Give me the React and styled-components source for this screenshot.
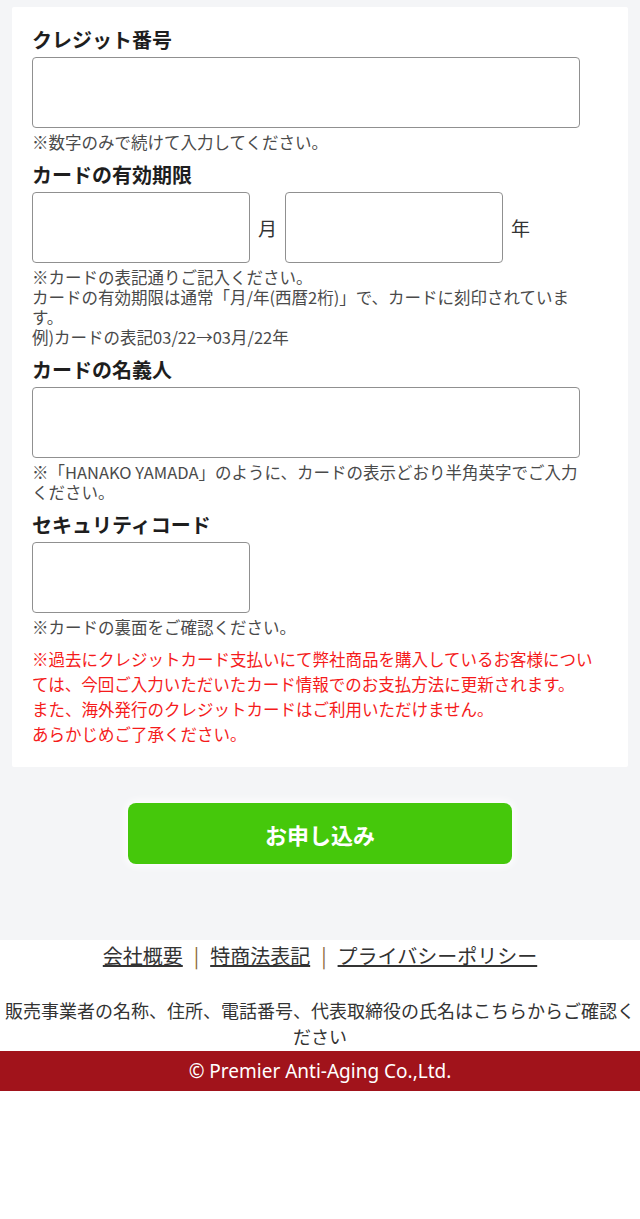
import React from 'react'
import styled, { createGlobalStyle } from 'styled-components'

const GlobalStyle = createGlobalStyle`
  body {
    margin: 0;
    background: #fff;
    font-family: "Noto Sans CJK JP", "Noto Sans", sans-serif;
    color: #222;
  }
`

const Main = styled.main`
  background: #f4f5f7;
  padding: 7px 12px 76px;
`

const Card = styled.div`
  background: #fff;
  border-radius: 2px;
  padding: 18px 20px 20px;
`

const Field = styled.div`
  margin-bottom: 8px;
`

const Label = styled.div`
  font-size: 20px;
  font-weight: 700;
  line-height: 30px;
  margin-bottom: 2px;
  color: #1e1e1e;
`

const Input = styled.input`
  display: block;
  box-sizing: border-box;
  width: ${props => props.width || '548px'};
  height: 71px;
  border: 1.5px solid #909090;
  border-radius: 4px;
  background: #fff;
  font-size: 18px;
  padding: 0 10px;
`

const InlineRow = styled.div`
  display: flex;
  align-items: center;
`

const Unit = styled.span`
  font-size: 19px;
  color: #333;
  margin: 0 8px 0 8px;
`

const Note = styled.p`
  margin: 4px 0 0;
  width: 548px;
  font-size: 16.5px;
  line-height: 20px;
  color: #4a4a4a;
`

const Caution = styled.p`
  margin: 10px 0 0;
  font-size: 16.5px;
  line-height: 25px;
  color: #f51b1b;
`

const SubmitButton = styled.button`
  display: block;
  width: 384px;
  height: 61px;
  margin: 36px auto 0;
  border: none;
  border-radius: 8px;
  background: #45c80b;
  color: #fff;
  font-family: inherit;
  font-size: 22px;
  font-weight: 700;
  box-shadow: 0 0 8px 2px #fff;
  cursor: pointer;
`

const Footer = styled.footer`
  text-align: center;
`

const Links = styled.nav`
  font-size: 20px;
  line-height: 32px;
  color: #333;
`

const FooterLink = styled.a`
  color: #333;
  text-decoration: underline;
`

const Sep = styled.span`
  margin: 0 11px;
  color: #8a6a3a;
`

const Disclosure = styled.p`
  margin: 25px 0 2px;
  font-size: 18px;
  line-height: 26px;
  color: #333;
`

const Copyright = styled.div`
  background: #a1131b;
  color: #fff;
  height: 40px;
  line-height: 40px;
  font-size: 19px;
  font-family: "Noto Sans", sans-serif;
`

export default function App() {
  return (
    <>
      <GlobalStyle />
      <Main>
        <Card>
          <Field>
            <Label>クレジット番号</Label>
            <Input type="text" />
            <Note>※数字のみで続けて入力してください。</Note>
          </Field>

          <Field>
            <Label>カードの有効期限</Label>
            <InlineRow>
              <Input type="text" width="218px" />
              <Unit>月</Unit>
              <Input type="text" width="218px" />
              <Unit>年</Unit>
            </InlineRow>
            <Note>
              ※カードの表記通りご記入ください。
              <br />
              カードの有効期限は通常「月/年(西暦2桁)」で、カードに刻印されています。
              <br />
              例)カードの表記03/22→03月/22年
            </Note>
          </Field>

          <Field>
            <Label>カードの名義人</Label>
            <Input type="text" />
            <Note>※「HANAKO YAMADA」のように、カードの表示どおり半角英字でご入力ください。</Note>
          </Field>

          <Field>
            <Label>セキュリティコード</Label>
            <Input type="text" width="218px" />
            <Note>※カードの裏面をご確認ください。</Note>
          </Field>

          <Caution>
            ※過去にクレジットカード支払いにて弊社商品を購入しているお客様については、今回ご入力いただいたカード情報でのお支払方法に更新されます。
            <br />
            また、海外発行のクレジットカードはご利用いただけません。
            <br />
            あらかじめご了承ください。
          </Caution>
        </Card>

        <SubmitButton type="submit">お申し込み</SubmitButton>
      </Main>

      <Footer>
        <Links>
          <FooterLink href="#">会社概要</FooterLink>
          <Sep>|</Sep>
          <FooterLink href="#">特商法表記</FooterLink>
          <Sep>|</Sep>
          <FooterLink href="#">プライバシーポリシー</FooterLink>
        </Links>
        <Disclosure>販売事業者の名称、住所、電話番号、代表取締役の氏名はこちらからご確認ください</Disclosure>
        <Copyright>© Premier Anti-Aging Co.,Ltd.</Copyright>
      </Footer>
    </>
  )
}
